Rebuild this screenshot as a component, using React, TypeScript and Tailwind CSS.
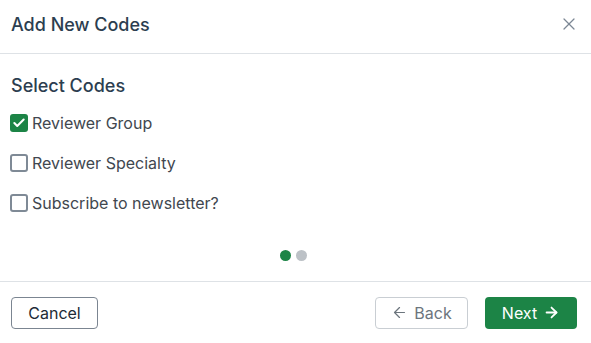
import { X, ArrowLeft, ArrowRight, Check } from "lucide-react"

const items = [
  { label: "Reviewer Group", checked: true },
  { label: "Reviewer Specialty", checked: false },
  { label: "Subscribe to newsletter?", checked: false },
]

export default function App() {
  return (
    <div
      className="w-[591px] h-[343px] bg-white flex flex-col overflow-hidden"
      style={{ fontFamily: "Inter, 'Noto Sans', sans-serif" }}
    >
      {/* header */}
      <div className="h-[54px] flex items-center justify-between pl-[11px] pr-[12px] border-b border-[#dee2e6] shrink-0">
        <h2 className="text-[18px] font-[450] text-[#2c3e50] -mt-[5px]">Add New Codes</h2>
        <X className="w-[20px] h-[20px] text-[#7c8794] -mt-[5px]" strokeWidth={1.5} />
      </div>

      {/* body */}
      <div className="flex-1 flex flex-col px-[10px] pt-[20px]">
        <h3 className="text-[18px] font-[450] text-[#2c3e50] pl-px leading-[24px]">Select Codes</h3>
        <div className="flex flex-col gap-[21px] mt-[15px]">
          {items.map((it) => (
            <label key={it.label} className="flex items-center gap-[4px] h-[19px]">
              {it.checked ? (
                <span className="w-[18px] h-[18px] rounded-[3px] bg-[#1c8446] flex items-center justify-center">
                  <Check className="w-[14px] h-[14px] text-white" strokeWidth={3.5} />
                </span>
              ) : (
                <span className="w-[18px] h-[18px] rounded-[3px] border-2 border-[#7f8a96] bg-white" />
              )}
              <span className="text-[16px] text-[#41474f]">{it.label}</span>
            </label>
          ))}
        </div>
        <div className="flex justify-center gap-[5px] mt-[38px] pr-[5px]">
          <span className="w-[11px] h-[11px] rounded-full bg-[#1c8446]" />
          <span className="w-[11px] h-[11px] rounded-full bg-[#bcc1c6]" />
        </div>
      </div>

      {/* footer */}
      <div className="h-[62px] border-t border-[#dee2e6] flex items-center justify-between pl-[11px] pr-[14px] shrink-0">
        <button className="h-[32px] w-[87px] rounded-[4px] border border-[#7b8591] text-[16px] text-[#212b36]">
          Cancel
        </button>
        <div className="flex gap-[17px]">
          <button className="h-[32px] w-[93px] rounded-[4px] border border-[#c9ced3] text-[16px] text-[#6c757d] flex items-center justify-center gap-[6px]">
            <ArrowLeft className="w-[17px] h-[17px]" strokeWidth={1.75} />
            Back
          </button>
          <button className="h-[32px] w-[92px] rounded-[4px] bg-[#1c8446] text-[16px] text-white flex items-center justify-center gap-[6px]">
            Next
            <ArrowRight className="w-[17px] h-[17px]" strokeWidth={2.5} />
          </button>
        </div>
      </div>
    </div>
  )
}
